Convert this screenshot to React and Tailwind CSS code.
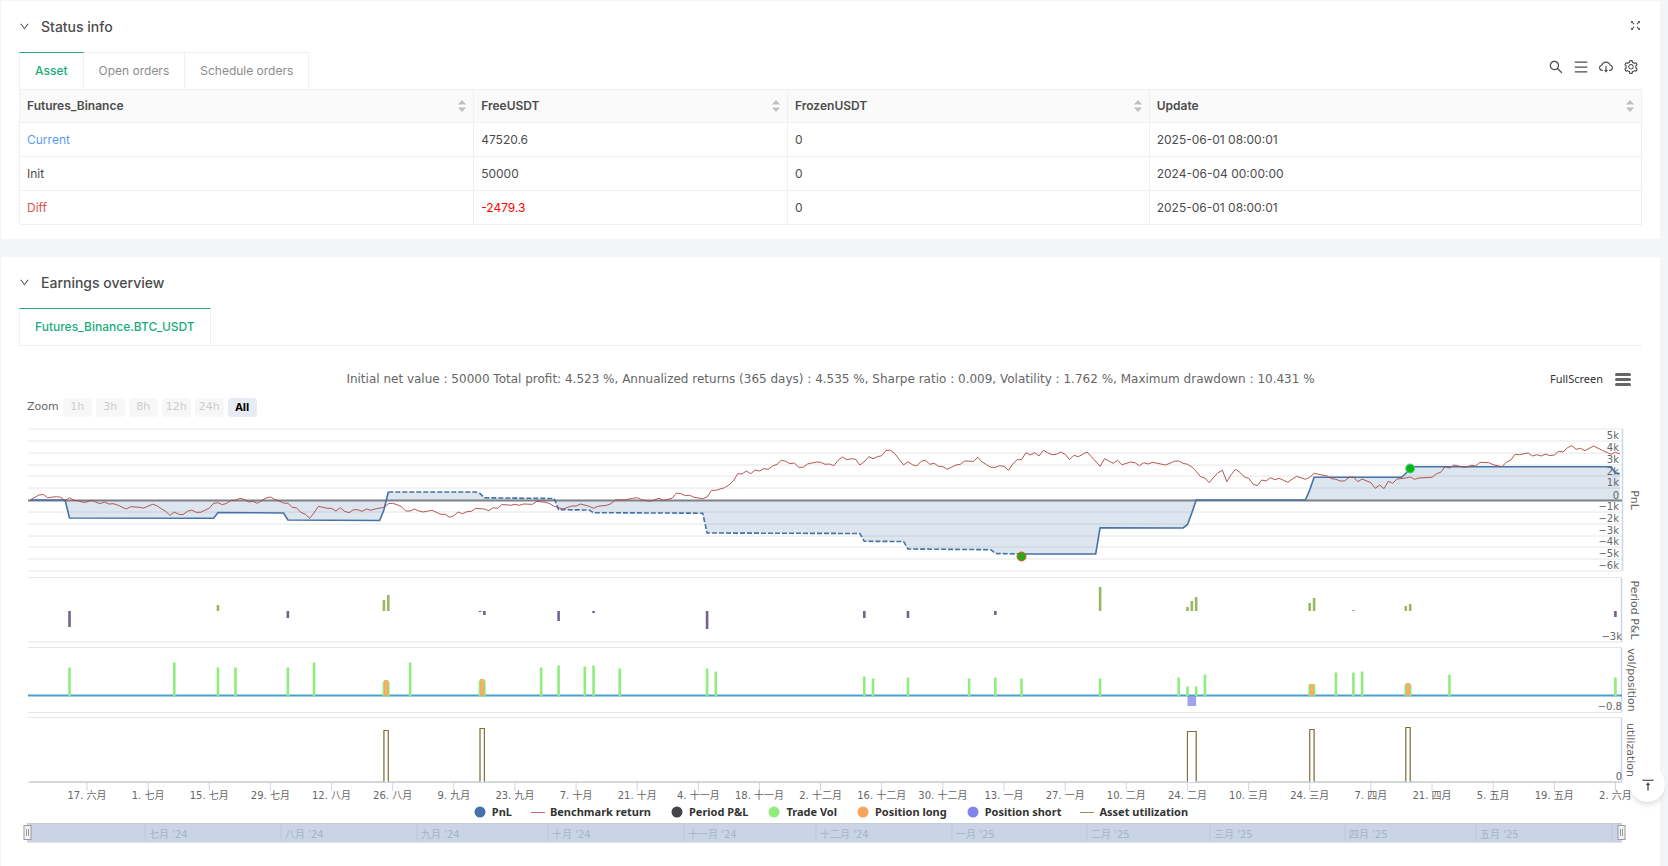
import React, { useState } from 'react';
import {
  AiOutlineCloudDownload,
  AiOutlineDown,
  AiOutlineFullscreen,
  AiOutlineMenu,
  AiOutlineSearch,
  AiOutlineSetting,
  AiOutlineVerticalAlignTop
} from 'react-icons/ai';

const columns = ['Futures_Binance', 'FreeUSDT', 'FrozenUSDT', 'Update'];

const assetRows = [
  { name: 'Current', nameClass: 'text-[#5a9cf0]', free: '47520.6', freeClass: '', frozen: '0', update: '2025-06-01 08:00:01' },
  { name: 'Init', nameClass: '', free: '50000', freeClass: '', frozen: '0', update: '2024-06-04 00:00:00' },
  { name: 'Diff', nameClass: 'text-[#d9534f]', free: '-2479.3', freeClass: 'text-[#ff0000]', frozen: '0', update: '2025-06-01 08:00:01' }
];

const zoomRanges = ['1h', '3h', '8h', '12h', '24h', 'All'];

const legend = [
  { label: 'PnL', color: '#4572a7', type: 'dot' },
  { label: 'Benchmark return', color: '#c46a6a', type: 'line' },
  { label: 'Period P&L', color: '#434348', type: 'dot' },
  { label: 'Trade Vol', color: '#90ed7d', type: 'dot' },
  { label: 'Position long', color: '#f7a35c', type: 'dot' },
  { label: 'Position short', color: '#8085e9', type: 'dot' },
  { label: 'Asset utilization', color: '#9a8b57', type: 'line' }
];

// chart geometry, x is counted in days since 2024-06-04
const LEFT = 9;
const RIGHT = 1603;
const x = (day) => 11.2 + day * 4.367;
const toPoints = (list) => list.map(([day, y]) => `${x(day).toFixed(1)},${y}`).join(' ');

const gridLines = [9, 21, 33, 45, 56, 68, 92, 104, 116, 127, 139, 151];
const pnlTicks = [
  ['5k', 15], ['4k', 27], ['3k', 39], ['2k', 51], ['1k', 62], ['0', 75],
  ['−1k', 86], ['−2k', 98], ['−3k', 110], ['−4k', 121], ['−5k', 133], ['−6k', 145]
];

const pnlStart = [[0, 80], [8, 80], [9, 98], [42, 98.3], [43, 92.5], [58, 93], [59, 100], [80, 100.5], [81, 90], [82, 72]];
const pnlDashed = [
  [82, 72], [102, 72], [103, 73.5], [104, 77.8], [120, 78.5], [121, 89.7], [128, 90], [129, 92.7],
  [154, 93.2], [155, 113], [190, 113.5], [191, 121.3], [200, 121.5], [201, 129], [220, 129.7], [221, 133.5], [227, 134]
];
const pnlEnd = [
  [227, 134], [244, 134], [245, 107.7], [264, 108], [265, 104.5], [266, 93], [267, 80], [292, 80], [293, 70],
  [294, 57.2], [314, 57.3], [315, 53.5], [316, 48], [317, 46.7], [362, 46.7], [363, 53], [364, 53.5]
];

const benchmark = [
  [0, 80], [2, 75], [3, 74.5], [4, 77.7], [6, 76.7], [7, 77.3], [8, 80.7], [9, 77.7], [10, 80.3], [11, 80.7], [12, 82.3],
  [13, 82], [14, 80.3], [15, 82], [16, 83.7], [17, 82], [18, 84], [19, 83.7], [20, 85], [22, 89], [23, 86.7], [25, 87.3],
  [26, 88], [28, 84.3], [29, 85.7], [30, 88.7], [31, 91.3], [32, 95.3], [33, 92], [34, 94.3], [35, 94.7], [36, 91.3],
  [37, 90], [38, 92.3], [39, 92.3], [41, 88.3], [42, 83.3], [43, 82.7], [44, 84.7], [45, 83.3], [46, 80.3], [47, 80.3],
  [48, 78.3], [49, 79.3], [50, 82], [51, 81.3], [52, 83.3], [54, 78], [55, 77], [56, 79.3], [57, 81], [58, 83], [59, 83.3],
  [60, 87.3], [61, 88], [62, 92.3], [63, 94.3], [64, 98.3], [65, 92.7], [66, 86.3], [68, 88.3], [69, 88.3], [70, 91],
  [71, 87.7], [72, 91.3], [73, 92.7], [74, 89.7], [75, 89.7], [76, 91.3], [77, 89], [78, 90.3], [79, 89], [81, 87.3],
  [82, 83.7], [83, 83.3], [84, 84.7], [85, 86.7], [86, 91], [87, 91], [88, 89], [89, 91], [90, 92], [92, 90.3], [94, 94.3],
  [95, 94.3], [96, 97.3], [97, 95.7], [98, 92], [99, 93.7], [100, 91.7], [101, 91.3], [102, 88.3], [104, 89], [105, 90.7],
  [106, 87.7], [107, 88.3], [108, 84.7], [109, 84.7], [110, 85.3], [111, 84.3], [112, 85.3], [113, 84], [115, 84.3],
  [116, 81.3], [118, 82.3], [119, 83.7], [120, 86.3], [122, 89], [124, 86], [125, 86], [126, 84], [128, 86.3], [129, 88.3],
  [130, 86.3], [132, 85.3], [133, 83.7], [134, 80], [135, 79.7], [136, 80], [138, 78.3], [139, 77.7], [140, 79.7],
  [142, 81.3], [144, 78.3], [145, 80.3], [147, 78.3], [148, 73], [149, 73.7], [150, 75.7], [151, 75.3], [152, 77.3],
  [154, 78.7], [155, 77], [156, 70.3], [157, 70.3], [159, 67.7], [160, 65], [161, 61], [162, 53.7], [163, 54], [164, 51],
  [165, 53.7], [166, 50], [167, 51], [168, 48.7], [169, 49.3], [170, 46], [171, 44.3], [172, 40.3], [173, 41.3],
  [174, 43.7], [175, 43], [176, 47.3], [177, 47.3], [178, 44], [180, 42], [181, 42.3], [182, 44.3], [183, 44], [184, 45.7],
  [185, 40.3], [186, 37], [187, 39.7], [188, 38.7], [189, 39.3], [190, 45], [191, 41.7], [192, 36.7], [193, 38.7],
  [194, 36.7], [195, 35.7], [196, 30.3], [197, 30.3], [198, 33.7], [199, 39.3], [200, 45], [201, 41.7], [202, 44.7],
  [203, 46], [204, 41.3], [205, 40.3], [206, 44.3], [207, 43.3], [208, 46.3], [209, 46.7], [210, 49.3], [212, 45],
  [213, 44.3], [214, 41], [216, 41.3], [217, 37.3], [218, 42], [219, 44.7], [220, 47.3], [221, 47.3], [222, 45.7],
  [223, 46.3], [224, 50.3], [225, 44], [226, 39.7], [227, 39.7], [228, 32.7], [229, 35], [230, 32.7], [231, 36],
  [232, 30.3], [233, 32.7], [234, 34.7], [235, 34.3], [236, 32], [237, 34.3], [238, 39.7], [239, 35.3], [240, 36.7],
  [242, 32], [243, 36.7], [245, 46.3], [246, 38.7], [247, 41], [248, 43.3], [249, 40.3], [250, 44.7], [252, 42],
  [253, 42.7], [254, 45.7], [255, 42.7], [256, 44], [257, 42.3], [260, 45], [262, 41.3], [263, 41], [264, 43.3],
  [265, 44.3], [266, 47], [267, 51.3], [268, 56.7], [269, 58], [270, 62.7], [271, 57.3], [272, 52.7], [273, 50.3],
  [274, 61.7], [275, 54.7], [276, 49.3], [277, 52.3], [278, 57], [279, 58.3], [280, 64], [281, 65.7], [282, 60], [283, 61],
  [284, 57.7], [285, 59.7], [286, 58.3], [287, 60.3], [288, 62.3], [289, 59], [290, 56.3], [292, 59.3], [293, 57.3],
  [294, 53.3], [295, 54.3], [297, 56], [298, 58.7], [299, 59.3], [300, 61], [301, 61], [302, 57.3], [303, 57], [304, 61.7],
  [305, 59], [307, 62.7], [308, 68.3], [309, 65], [310, 68.7], [311, 61.3], [312, 63.3], [313, 59], [315, 58], [316, 57],
  [317, 59.3], [318, 58], [321, 57.3], [322, 53.7], [323, 52.3], [324, 46.7], [325, 48], [326, 45], [328, 47], [329, 47],
  [330, 45.3], [331, 46], [332, 42.3], [334, 42.7], [335, 44.7], [337, 46.7], [338, 42.3], [339, 40.3], [340, 34.3],
  [341, 34.7], [343, 33], [344, 36], [345, 34.7], [346, 36], [347, 34], [348, 35.7], [349, 35], [350, 31.3], [351, 32],
  [352, 27.7], [353, 25.7], [354, 29.3], [355, 28.3], [356, 30.7], [358, 26], [360, 30.3], [362, 34.3], [363, 32.3], [364, 34]
];

// [day, height], negative values hang under the base line
const periodBars = [
  [9, -16], [43, 6], [59, -7], [81, 11], [82, 16], [103, -1], [104, -4], [121, -10], [129, -2], [155, -18], [191, -7],
  [201, -7], [221, -4], [245, 24], [265, 4], [266, 10], [267, 14], [293, 8], [294, 13], [303, 1], [315, 5], [316, 7], [363, -6]
];

const volumeBars = [
  [9, 29], [33, 34], [43, 29], [47, 29], [59, 29], [65, 34], [81, 15], [82, 15], [87, 34], [103, 16], [104, 16], [117, 29],
  [121, 31], [127, 30], [129, 31], [135, 28], [155, 28], [157, 25], [191, 20], [193, 18], [201, 19], [215, 18], [221, 19],
  [227, 18], [245, 18], [263, 19], [265, 10], [267, 10], [269, 22], [293, 12], [294, 12], [299, 24], [303, 24], [305, 25],
  [315, 12], [316, 12], [325, 22], [363, 19]
];

const longPositions = [[81, 16], [103, 17], [293, 12], [315, 13]];
const utilization = [[81, 82, 310.5], [103, 104, 308.5], [265, 267, 311.5], [293, 294, 309.5], [315, 316, 307.5]];

const dateTicks = [
  '17. 六月', '1. 七月', '15. 七月', '29. 七月', '12. 八月', '26. 八月', '9. 九月', '23. 九月', '7. 十月', '21. 十月',
  '4. 十一月', '18. 十一月', '2. 十二月', '16. 十二月', '30. 十二月', '13. 一月', '27. 一月', '10. 二月', '24. 二月',
  '10. 三月', '24. 三月', '7. 四月', '21. 四月', '5. 五月', '19. 五月', '2. 六月'
];

const navigatorTicks = [
  [126, "七月 '24"], [262, "八月 '24"], [398, "九月 '24"], [529, "十月 '24"], [665, "十一月 '24"], [797, "十二月 '24"],
  [933, "一月 '25"], [1068, "二月 '25"], [1191, "三月 '25"], [1326, "四月 '25"], [1457, "五月 '25"], [1593, '']
];

const Sorter = () => (
  <svg viewBox="0 0 8 12" className="h-3 w-2 shrink-0 fill-[#bfbfbf]" aria-hidden="true">
    <path d="M4 0 8 4.5H0ZM4 12 0 7.5H8Z" />
  </svg>
);

const SectionTitle = ({ children, action }) => (
  <div className="flex h-[51px] items-center justify-between">
    <h2 className="flex items-center gap-[11px] text-sm font-medium text-[#4c4c4c]">
      <AiOutlineDown className="h-[11px] w-[11px]" />
      {children}
    </h2>
    {action}
  </div>
);

const Tab = ({ active, children, onClick }) => (
  <button
    type="button"
    role="tab"
    aria-selected={active}
    onClick={onClick}
    className={
      active
        ? 'h-[37px] border-x border-t border-x-[#f0f0f0] border-t-[#18ad7c] px-[15px] text-xs font-medium text-[#18ad7c]'
        : 'h-[37px] border-r border-t border-[#f0f0f0] px-[15px] text-xs text-[#8c8c8c]'
    }
  >
    {children}
  </button>
);

const EarningsChart = () => (
  <svg viewBox="0 0 1623 384" className="mt-[3px] block w-full font-[DejaVu_Sans,Noto_Sans_CJK_SC,sans-serif] text-[10px]">
    {gridLines.map((y) => (
      <line key={y} x1={LEFT} x2={RIGHT} y1={y} y2={y} stroke="#e6e6e6" />
    ))}

    {/* PnL pane */}
    <path d="M1603.5 9V151M1602.5 158V222M1602.5 228V292M1602.5 298V362" stroke="#ccd6eb" strokeWidth="1.5" fill="none" />
    <polygon
      points={`${x(0)},80 ${toPoints([...pnlStart, ...pnlDashed, ...pnlEnd])} ${x(364)},80`}
      fill="#4572a7"
      fillOpacity="0.18"
    />
    {pnlTicks.map(([label, y]) => (
      <text key={label} x="1600" y={y + 4} textAnchor="end" fill="#666">{label}</text>
    ))}
    <line x1={LEFT} x2={RIGHT} y1="80.5" y2="80.5" stroke="#7d8086" strokeWidth="2" />
    <g fill="none" stroke="#4572a7" strokeWidth="1.6">
      <polyline points={toPoints(pnlStart)} />
      <polyline points={toPoints(pnlDashed)} strokeDasharray="5 2" />
      <polyline points={toPoints(pnlEnd)} />
    </g>
    <polyline points={toPoints(benchmark)} fill="none" stroke="#aa4643" strokeWidth="0.9" />
    <circle cx={x(227)} cy="136.5" r="4.5" fill="#0fb80f" stroke="#f0503c" />
    <path d={`M${x(227)} 133v7`} stroke="#a06a20" />
    <circle cx={x(316)} cy="48.5" r="4.5" fill="#00c000" stroke="#5fc6a0" />
    <path d={`M${x(316)} 45v5`} stroke="#4572a7" />
    <text transform="translate(1612 80) rotate(90)" textAnchor="middle" fontSize="11" fill="#666">PnL</text>

    {/* Period P&L pane */}
    <path d="M9 157.5H1603M9 222H1603" stroke="#e6e6e6" />
    {periodBars.map(([day, size]) => (
      <rect
        key={day}
        x={x(day) - 1.3}
        y={size > 0 ? 191 - size : 191}
        width="2.6"
        height={Math.abs(size)}
        fill={size > 0 ? '#99b862' : '#77608f'}
      />
    ))}
    <text x="1603" y="220" textAnchor="end" fill="#666">−3k</text>
    <text transform="translate(1612 190) rotate(90)" textAnchor="middle" fontSize="11" fill="#666">Period P&amp;L</text>

    {/* Volume and position pane */}
    <path d="M9 227.5H1603M9 292.5H1603" stroke="#e6e6e6" />
    <line x1={LEFT} x2={RIGHT} y1="275.5" y2="275.5" stroke="#4a9fd0" strokeWidth="2" />
    {volumeBars.map(([day, size]) => (
      <rect key={day} x={x(day) - 1.3} y={276.5 - size} width="2.6" height={size} fill="#90ed7d" />
    ))}
    {longPositions.map(([day, size]) => (
      <rect key={day} x={x(day)} y={276 - size} width="4.4" height={size} fill="#f7a35c" fillOpacity="0.85" />
    ))}
    <rect x={x(265)} y="276" width="8.7" height="10" fill="#8085e9" fillOpacity="0.75" />
    <text x="1603" y="290" textAnchor="end" fill="#666">−0.8</text>
    <text transform="translate(1609 260) rotate(90)" textAnchor="middle" fontSize="11" fill="#666">vol/position</text>

    {/* Utilization pane */}
    <line x1={LEFT} x2={RIGHT} y1="297.5" y2="297.5" stroke="#e6e6e6" />
    <line x1={LEFT} x2={RIGHT} y1="362.5" y2="362.5" stroke="#ccd6eb" />
    <path
      d={`M11 361.5${utilization.map(([from, to, y]) => `H${x(from)}V${y}H${x(to)}V361.5`).join('')}H1601`}
      fill="none"
      stroke="#8a7c45"
      strokeWidth="1.2"
      strokeOpacity="0.3"
    />
    {utilization.map(([from, to, y]) => (
      <path key={from} d={`M${x(from)} 361.5V${y}H${x(to)}V361.5`} fill="none" stroke="#7d6f38" strokeWidth="1.1" />
    ))}
    <text x="1603" y="360" textAnchor="end" fill="#666">0</text>
    <text transform="translate(1608 330) rotate(90)" textAnchor="middle" fontSize="11" fill="#666">utilization</text>

    {/* Date axis */}
    {dateTicks.map((label, i) => (
      <g key={label}>
        <line x1={x(13 + i * 14)} x2={x(13 + i * 14)} y1="363" y2="371" stroke="#ccd6eb" />
        <text x={x(13 + i * 14)} y="379" textAnchor="middle" fill="#666">{label}</text>
      </g>
    ))}
  </svg>
);

const Navigator = () => (
  <svg viewBox="0 0 1623 20" className="mt-[3px] block w-full overflow-visible font-[DejaVu_Sans,Noto_Sans_CJK_SC,sans-serif] text-[10px]">
    <rect x="8" y="0" width="1595" height="19" fill="#c9d5e6" />
    <path d="M8 0.5H1603M8 19H1603" stroke="#c8ccd2" />
    {navigatorTicks.map(([pos, label]) => (
      <g key={pos}>
        <line x1={pos} x2={pos} y1="1" y2="19" stroke="#bdc9da" />
        <text x={pos + 4} y="15" fill="#a6b3c6">{label}</text>
      </g>
    ))}
    {[9, 1603].map((pos) => (
      <g key={pos} stroke="#999">
        <rect x={pos - 4} y="2.5" width="7" height="14" fill="#f2f2f2" />
        <path d={`M${pos - 1.5} 6v7M${pos + 0.5} 6v7`} />
      </g>
    ))}
  </svg>
);

const App = () => {
  const [tab, setTab] = useState('Asset');
  const [range, setRange] = useState('All');

  return (
    <div className="min-h-screen bg-[#f4f5f8] pl-px pr-2 pt-px font-[Inter,sans-serif] text-[#4c4c4c]">
      <main className="flex min-h-[865px] flex-col gap-[18px]">
        <section className="bg-white px-[18px] pb-[14px]">
          <SectionTitle
            action={
              <button type="button" aria-label="Full screen" className="pb-[3px]">
                <AiOutlineFullscreen className="h-[13px] w-[13px]" />
              </button>
            }
          >
            Status info
          </SectionTitle>

          <div className="flex items-center justify-between">
            <div role="tablist" className="flex">
              {['Asset', 'Open orders', 'Schedule orders'].map((name) => (
                <Tab key={name} active={tab === name} onClick={() => setTab(name)}>{name}</Tab>
              ))}
            </div>
            <div className="flex gap-[9px] pb-2 pr-[3px]">
              <button type="button" aria-label="Search"><AiOutlineSearch className="h-4 w-4" /></button>
              <button type="button" aria-label="Columns"><AiOutlineMenu className="h-4 w-4" /></button>
              <button type="button" aria-label="Download"><AiOutlineCloudDownload className="h-4 w-4" /></button>
              <button type="button" aria-label="Settings"><AiOutlineSetting className="h-4 w-4" /></button>
            </div>
          </div>

          <table className="w-full table-fixed border-collapse text-left text-xs">
            <colgroup>
              <col className="w-[28%]" />
              <col className="w-[19.35%]" />
              <col className="w-[22.3%]" />
              <col />
            </colgroup>
            <thead className="bg-[#fafafa]">
              <tr>
                {columns.map((name) => (
                  <th key={name} className="h-[33px] border border-[#f0f0f0] px-[7px] font-semibold">
                    <div className="flex items-center justify-between">
                      {name}
                      <Sorter />
                    </div>
                  </th>
                ))}
              </tr>
            </thead>
            <tbody>
              {assetRows.map((row) => (
                <tr key={row.name}>
                  <td className={`h-[34px] border border-[#f0f0f0] px-[7px] ${row.nameClass}`}>{row.name}</td>
                  <td className={`border border-[#f0f0f0] px-[7px] ${row.freeClass}`}>{row.free}</td>
                  <td className="border border-[#f0f0f0] px-[7px]">{row.frozen}</td>
                  <td className="border border-[#f0f0f0] px-[7px]">{row.update}</td>
                </tr>
              ))}
            </tbody>
          </table>
        </section>

        <section className="grow bg-white px-[18px]">
          <SectionTitle>Earnings overview</SectionTitle>
          <div role="tablist" className="flex border-b border-[#f0f0f0]">
            <Tab active>Futures_Binance.BTC_USDT</Tab>
          </div>

          <div className="mt-5 grid h-[26px] grid-cols-[1fr_auto_1fr] items-center font-[DejaVu_Sans,sans-serif]">
            <p className="col-start-2 text-xs text-[#666]">
              Initial net value : 50000 Total profit: 4.523 %, Annualized returns (365 days) : 4.535 %, Sharpe ratio : 0.009, Volatility : 1.762 %, Maximum drawdown : 10.431 %
            </p>
            <div className="flex items-center justify-end gap-3 pr-[11px]">
              <button type="button" className="font-[Noto_Sans,sans-serif] text-[11px] text-[#333]">FullScreen</button>
              <button type="button" aria-label="Chart menu" className="flex w-4 flex-col gap-[2px]">
                <span className="h-[3px] rounded-full bg-[#666]" />
                <span className="h-[3px] rounded-full bg-[#666]" />
                <span className="h-[3px] rounded-full bg-[#666]" />
              </button>
            </div>
          </div>

          <div className="mt-[6px] flex h-[19px] items-center gap-1 pl-2 font-[DejaVu_Sans,sans-serif] text-[11px]">
            <span className="text-[#666]">Zoom</span>
            {zoomRanges.map((name) => (
              <button
                key={name}
                type="button"
                disabled={name !== 'All'}
                onClick={() => setRange(name)}
                className={
                  range === name
                    ? 'h-[19px] w-[29px] rounded-sm bg-[#e6ebf5] font-[Noto_Sans,sans-serif] font-bold text-black'
                    : 'h-[19px] w-[29px] rounded-sm bg-[#f7f7f7] text-[#ccc]'
                }
              >
                {name}
              </button>
            ))}
          </div>

          <EarningsChart />

          <div className="flex h-4 items-center justify-center gap-[19px] font-[Noto_Sans,sans-serif] text-[11px] font-bold text-[#333]">
            {legend.map((item) => (
              <button key={item.label} type="button" className="flex items-center gap-[5px]">
                <svg viewBox="0 0 14 12" className="h-3 w-[14px]" aria-hidden="true">
                  {item.type === 'dot'
                    ? <circle cx="7" cy="6" r="5.5" fill={item.color} />
                    : <path d="M0 6.5H14" stroke={item.color} />}
                </svg>
                {item.label}
              </button>
            ))}
          </div>

          <Navigator />
        </section>
      </main>

      <button
        type="button"
        aria-label="Back to top"
        className="fixed bottom-16 right-[3px] flex h-[35px] w-[35px] items-center justify-center rounded-full bg-white text-[#333] shadow-md"
      >
        <AiOutlineVerticalAlignTop className="h-4 w-4" />
      </button>
    </div>
  );
};

export default App;
